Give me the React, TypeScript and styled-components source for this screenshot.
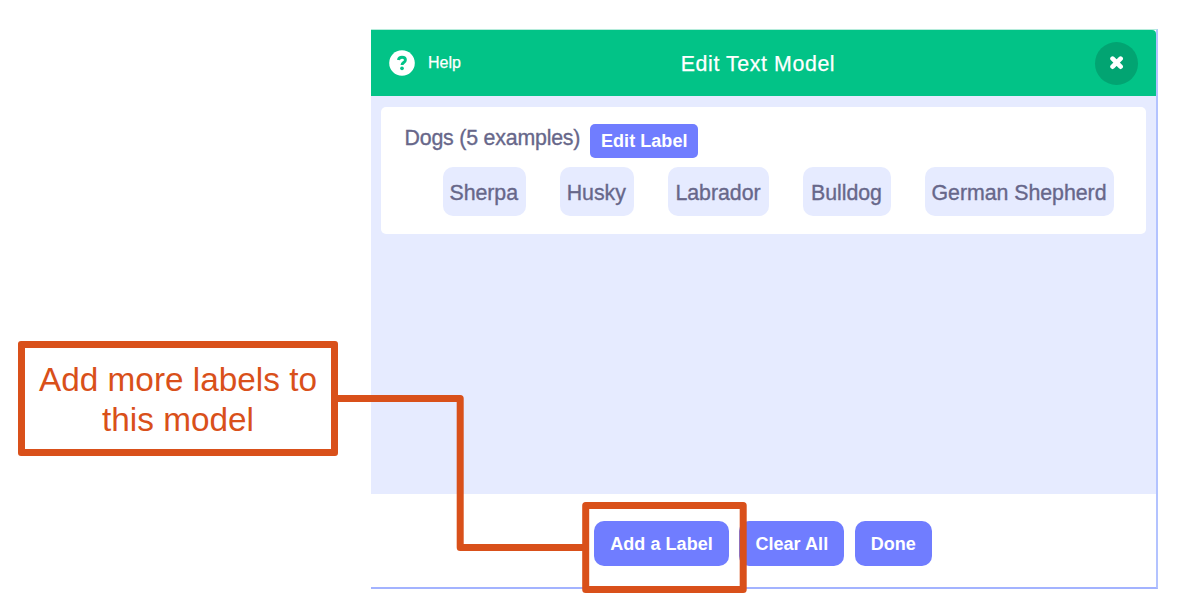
import React from "react";
import styled, { createGlobalStyle } from "styled-components";

const Global = createGlobalStyle`
  * { box-sizing: border-box; }
  body {
    margin: 0;
    background: #fff;
    font-family: "Liberation Sans", Arial, sans-serif;
  }
`;

const ORANGE = "#d9501a";

const Page = styled.main`
  position: relative;
  display: flex;
  align-items: flex-start;
  width: 1181px;
  height: 612px;
  overflow: hidden;
  background: #fff;
`;

const Callout = styled.aside`
  flex: none;
  width: 320px;
  height: 115px;
  margin: 341px 33px 0 18px;
  padding-top: 12px;
  border: 7px solid ${ORANGE};
  border-radius: 3px;
  color: ${ORANGE};
  font-size: 33.33px;
  line-height: 40px;
  text-align: center;
  white-space: nowrap;
`;

const Dialog = styled.section`
  flex: none;
  display: flex;
  flex-direction: column;
  width: 787px;
  height: 560px;
  margin-top: 29px;
  border-right: 2px solid #b3c3ff;
  border-bottom: 2px solid #a3b3ff;
  border-top: 1px solid #b5ecdb;
  background: #fff;
`;

const Header = styled.header`
  flex: none;
  display: grid;
  grid-template-columns: 1fr auto 1fr;
  align-items: center;
  height: 66px;
  padding: 0 18px;
  background: #02c387;
  border-top-right-radius: 4px;
  color: #fff;
`;

const HelpButton = styled.div`
  display: flex;
  align-items: center;
  gap: 13px;
  font-size: 16px;
  line-height: 20px;
  -webkit-text-stroke: 0.25px currentColor;
  svg { display: block; }
`;

const Title = styled.h1`
  margin: 1px 11px 0 0;
  font-size: 21.33px;
  line-height: 26px;
  font-weight: 400;
  letter-spacing: 0.6px;
  -webkit-text-stroke: 0.25px currentColor;
`;

const CloseButton = styled.div`
  justify-self: end;
  display: flex;
  align-items: center;
  justify-content: center;
  width: 43px;
  height: 43px;
  border-radius: 50%;
  background: #02a472;
`;

const Body = styled.div`
  flex: none;
  height: 398px;
  padding: 11px 10px 0;
  background: #e6ebff;
`;

const Card = styled.div`
  height: 127px;
  padding: 17px 0 0 24px;
  border-radius: 5px;
  background: #fff;
  color: #67678a;
  font-size: 21.33px;
  -webkit-text-stroke: 0.35px currentColor;
`;

const CardHead = styled.div`
  display: flex;
  align-items: flex-start;
  gap: 10px;
  height: 43px;
  line-height: 28px;
  white-space: nowrap;
`;

const CardTitle = styled.span`
  margin-left: -0.5px;
  letter-spacing: -0.19px;
`;

const Button = styled.button<{ $small?: boolean; $width: number }>`
  display: flex;
  align-items: center;
  justify-content: center;
  width: ${(p) => p.$width}px;
  height: ${(p) => (p.$small ? 34 : 45)}px;
  padding: ${(p) => (p.$small ? 0 : 2)}px 0 0;
  border: 0;
  border-radius: ${(p) => (p.$small ? 5 : 10)}px;
  background: #707dff;
  color: #fff;
  font: bold 18px "Liberation Sans", Arial, sans-serif;
  letter-spacing: 0.05px;
  white-space: nowrap;
  -webkit-text-stroke: 0;
`;

const Chips = styled.div`
  display: flex;
  gap: 34px;
  padding-left: 38px;
`;

const Chip = styled.span<{ $width: number }>`
  flex: none;
  display: flex;
  align-items: center;
  justify-content: center;
  width: ${(p) => p.$width}px;
  height: 49px;
  padding: 3px 1px 0 0;
  border-radius: 10px;
  background: #e6ebff;
  letter-spacing: -0.03px;
  white-space: nowrap;
`;

const Footer = styled.footer`
  flex: 1;
  display: flex;
  gap: 10.5px;
  padding: 27px 0 0 223.3px;
`;

const Connector = styled.svg`
  position: absolute;
  left: 0;
  top: 0;
  pointer-events: none;
`;

const examples: [string, number][] = [
  ["Sherpa", 82.5],
  ["Husky", 74.5],
  ["Labrador", 101],
  ["Bulldog", 88],
  ["German Shepherd", 189],
];

export default function App() {
  return (
    <>
      <Global />
      <Page>
        <Callout>
          Add more labels to
          <br />
          this model
        </Callout>
        <Dialog>
          <Header>
            <HelpButton>
              <svg width="26" height="26" viewBox="0 0 26 26">
                <circle cx="13" cy="13" r="12.8" fill="#fff" />
                <path
                  d="M9.4 10.1C9.8 8 11.2 7.3 13 7.3c2 0 3.4 1 3.4 2.6 0 2.6-3.4 2.5-3.4 5"
                  fill="none"
                  stroke="#02c387"
                  strokeWidth="2.9"
                />
                <circle cx="13" cy="18.3" r="1.85" fill="#02c387" />
              </svg>
              Help
            </HelpButton>
            <Title>Edit Text Model</Title>
            <CloseButton>
              <svg width="14" height="14" viewBox="0 0 14 14">
                <path
                  d="M2.6 2.7l8 8M10.6 2.7l-8 8"
                  stroke="#fff"
                  strokeWidth="4.7"
                  strokeLinecap="round"
                />
              </svg>
            </CloseButton>
          </Header>
          <Body>
            <Card>
              <CardHead>
                <CardTitle>Dogs (5 examples)</CardTitle>
                <Button $small $width={108}>Edit Label</Button>
              </CardHead>
              <Chips>
                {examples.map(([name, width]) => (
                  <Chip key={name} $width={width}>{name}</Chip>
                ))}
              </Chips>
            </Card>
          </Body>
          <Footer>
            <Button $width={134.5}>Add a Label</Button>
            <Button $width={105}>Clear All</Button>
            <Button $width={77}>Done</Button>
          </Footer>
        </Dialog>
        <Connector width="1181" height="612" fill="none" stroke={ORANGE} strokeWidth="7" strokeLinejoin="round">
          <path d="M335 398.5H460.2V547.5H586" />
          <rect x="585.7" y="505.5" width="157.5" height="84" />
        </Connector>
      </Page>
    </>
  );
}
